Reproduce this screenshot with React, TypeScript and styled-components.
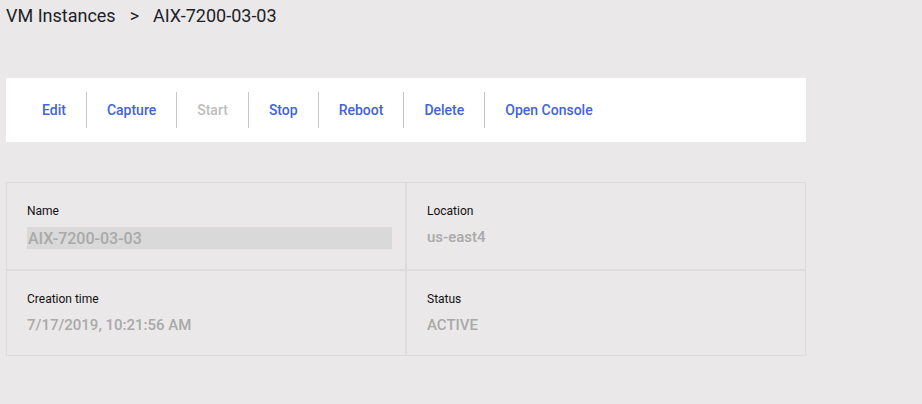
import React from "react";
import styled, { createGlobalStyle } from "styled-components";

const Global = createGlobalStyle`
  html, body { margin: 0; padding: 0; background: #eae8e8; }
  body { font-family: Roboto, "Noto Sans", Arial, sans-serif; }
  * { box-sizing: border-box; }
`;

const Page = styled.div`
  width: 922px;
  height: 404px;
  background: #eae8e8;
  padding: 5px 6px 0;
  display: flex;
  flex-direction: column;
`;

const Breadcrumb = styled.div`
  display: flex;
  align-items: center;
  font-size: 18px;
  line-height: 21px;
  color: #1e1e28;
`;

const Crumb = styled.span``;

const CrumbSep = styled.span`
  margin: 0 14px 0 14px;
`;

const Toolbar = styled.div`
  margin-top: 52px;
  width: 800px;
  height: 64px;
  background: #ffffff;
  display: flex;
  align-items: center;
  padding: 0 16px;
`;

const Action = styled.button<{ $disabled?: boolean; $first?: boolean }>`
  appearance: none;
  background: none;
  border: none;
  border-left: ${(p) => (p.$first ? "none" : "1px solid #c6c6c6")};
  height: 36px;
  padding: 0 20px;
  font-family: Roboto, Arial, sans-serif;
  font-size: 14px;
  font-weight: 500;
  color: ${(p) => (p.$disabled ? "#bdbdbd" : "#4263de")};
  cursor: ${(p) => (p.$disabled ? "default" : "pointer")};
`;

const Grid = styled.div`
  margin-top: 40px;
  width: 800px;
  display: grid;
  grid-template-columns: 400px 400px;
`;

const Cell = styled.div`
  border: 1px solid #dcdcdc;
  padding: 20px 13px 20px 20px;
  display: flex;
  flex-direction: column;
`;

const Label = styled.div`
  font-size: 12px;
  line-height: 16px;
  color: #111;
`;

const Value = styled.div<{ $boxed?: boolean }>`
  margin-top: 8px;
  font-size: ${(p) => (p.$boxed ? "16px" : "15px")};
  font-weight: 500;
  line-height: ${(p) => (p.$boxed ? "21px" : "20px")};
  padding: ${(p) => (p.$boxed ? "1px 1px 0" : "0")};
  height: ${(p) => (p.$boxed ? "22px" : "auto")};
  background: ${(p) => (p.$boxed ? "#d9d9d9" : "transparent")};
  color: #a9a9a9;
`;

const actions = ["Edit", "Capture", "Start", "Stop", "Reboot", "Delete", "Open Console"];

const fields = [
  { label: "Name", value: "AIX-7200-03-03", boxed: true },
  { label: "Location", value: "us-east4" },
  { label: "Creation time", value: "7/17/2019, 10:21:56 AM" },
  { label: "Status", value: "ACTIVE" },
];

export default function App() {
  return (
    <Page>
      <Global />
      <Breadcrumb>
        <Crumb>VM Instances</Crumb>
        <CrumbSep>&gt;</CrumbSep>
        <Crumb>AIX-7200-03-03</Crumb>
      </Breadcrumb>
      <Toolbar>
        {actions.map((a, i) => (
          <Action key={a} $first={i === 0} $disabled={a === "Start"}>
            {a}
          </Action>
        ))}
      </Toolbar>
      <Grid>
        {fields.map((f) => (
          <Cell key={f.label}>
            <Label>{f.label}</Label>
            <Value $boxed={f.boxed}>{f.value}</Value>
          </Cell>
        ))}
      </Grid>
    </Page>
  );
}
